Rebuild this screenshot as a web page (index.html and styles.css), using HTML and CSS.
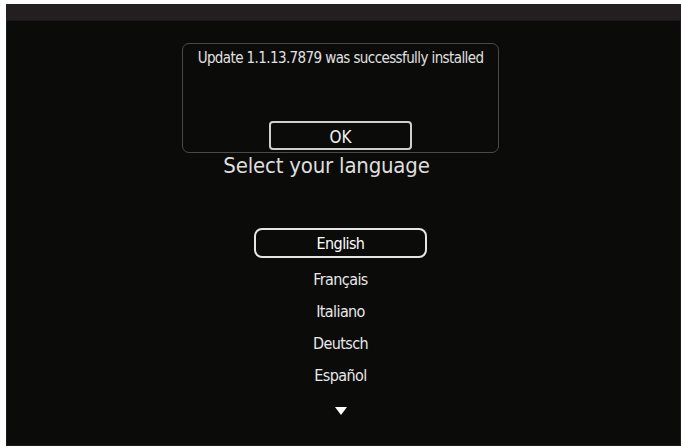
FILE: index.html
```html
<!DOCTYPE html>
<html lang="en">
    <head>
        <meta charset="UTF-8" />
        <meta name="viewport" content="width=device-width, initial-scale=1.0" />
        <title>Language</title>
        <link rel="stylesheet" href="styles.css">
    </head>

    <body>
        <div class="frame">
            <main class="screen">
                <section class="dialog">
                    <p class="dialog-text">Update 1.1.13.7879 was successfully installed</p>
                    <button class="ok-btn">OK</button>
                </section>

                <h1 class="title">Select your language</h1>

                <ul class="languages">
                    <li class="lang selected">English</li>
                    <li class="lang">Français</li>
                    <li class="lang">Italiano</li>
                    <li class="lang">Deutsch</li>
                    <li class="lang">Español</li>
                </ul>

                <div class="more"></div>
            </main>
        </div>
    </body>
</html>
```

FILE: styles.css
```css
* {
    margin: 0;
    padding: 0;
    box-sizing: border-box;
}

html {
    font-family: "DejaVu Sans Condensed", "DejaVu Sans", sans-serif;
    font-stretch: condensed;
}

body {
    background: #ffffff;
    width: 681px;
    height: 448px;
    overflow: hidden;
}

.frame {
    margin: 4px 0 0 6px;
    height: 442px;
    background: #231f20;
    padding-top: 16px;
}

.screen {
    height: 100%;
    background: #0b0b0a;
    border: 1px solid #1c1c1c;
    display: flex;
    flex-direction: column;
    align-items: center;
    padding-right: 6px;
    color: #e6e6e6;
}

.dialog {
    margin-top: 22px;
    width: 317px;
    height: 110px;
    border: 1px solid #4a4a4a;
    border-radius: 7px;
    display: flex;
    flex-direction: column;
    align-items: center;
    padding-top: 5px;
}

.dialog-text {
    font-size: 15px;
    letter-spacing: -0.6px;
    color: #e0e0e0;
}

.ok-btn {
    margin-top: auto;
    margin-bottom: 2px;
    width: 143px;
    height: 29px;
    background: transparent;
    border: 2px solid #cfcfcf;
    border-radius: 4px;
    color: #f0f0f0;
    font-family: inherit;
    font-stretch: condensed;
    font-size: 17px;
    padding-top: 3px;
}

.title {
    font-weight: normal;
    font-size: 22px;
    letter-spacing: -0.2px;
    color: #dedede;
    margin-right: 28px;
    line-height: 26px;
}

.languages {
    list-style: none;
    margin-top: 49px;
    display: flex;
    flex-direction: column;
    align-items: center;
    gap: 2px;
}

.lang {
    width: 173px;
    height: 30px;
    line-height: 28px;
    text-align: center;
    font-size: 16px;
    letter-spacing: -0.6px;
    color: #e8e8e8;
}

.selected {
    border: 2px solid #e6e6e6;
    border-radius: 8px;
    color: #ffffff;
    margin-bottom: 6px;
}

.more {
    margin-top: 15px;
    width: 0;
    height: 0;
    border-left: 6px solid transparent;
    border-right: 6px solid transparent;
    border-top: 8px solid #ffffff;
}
```
